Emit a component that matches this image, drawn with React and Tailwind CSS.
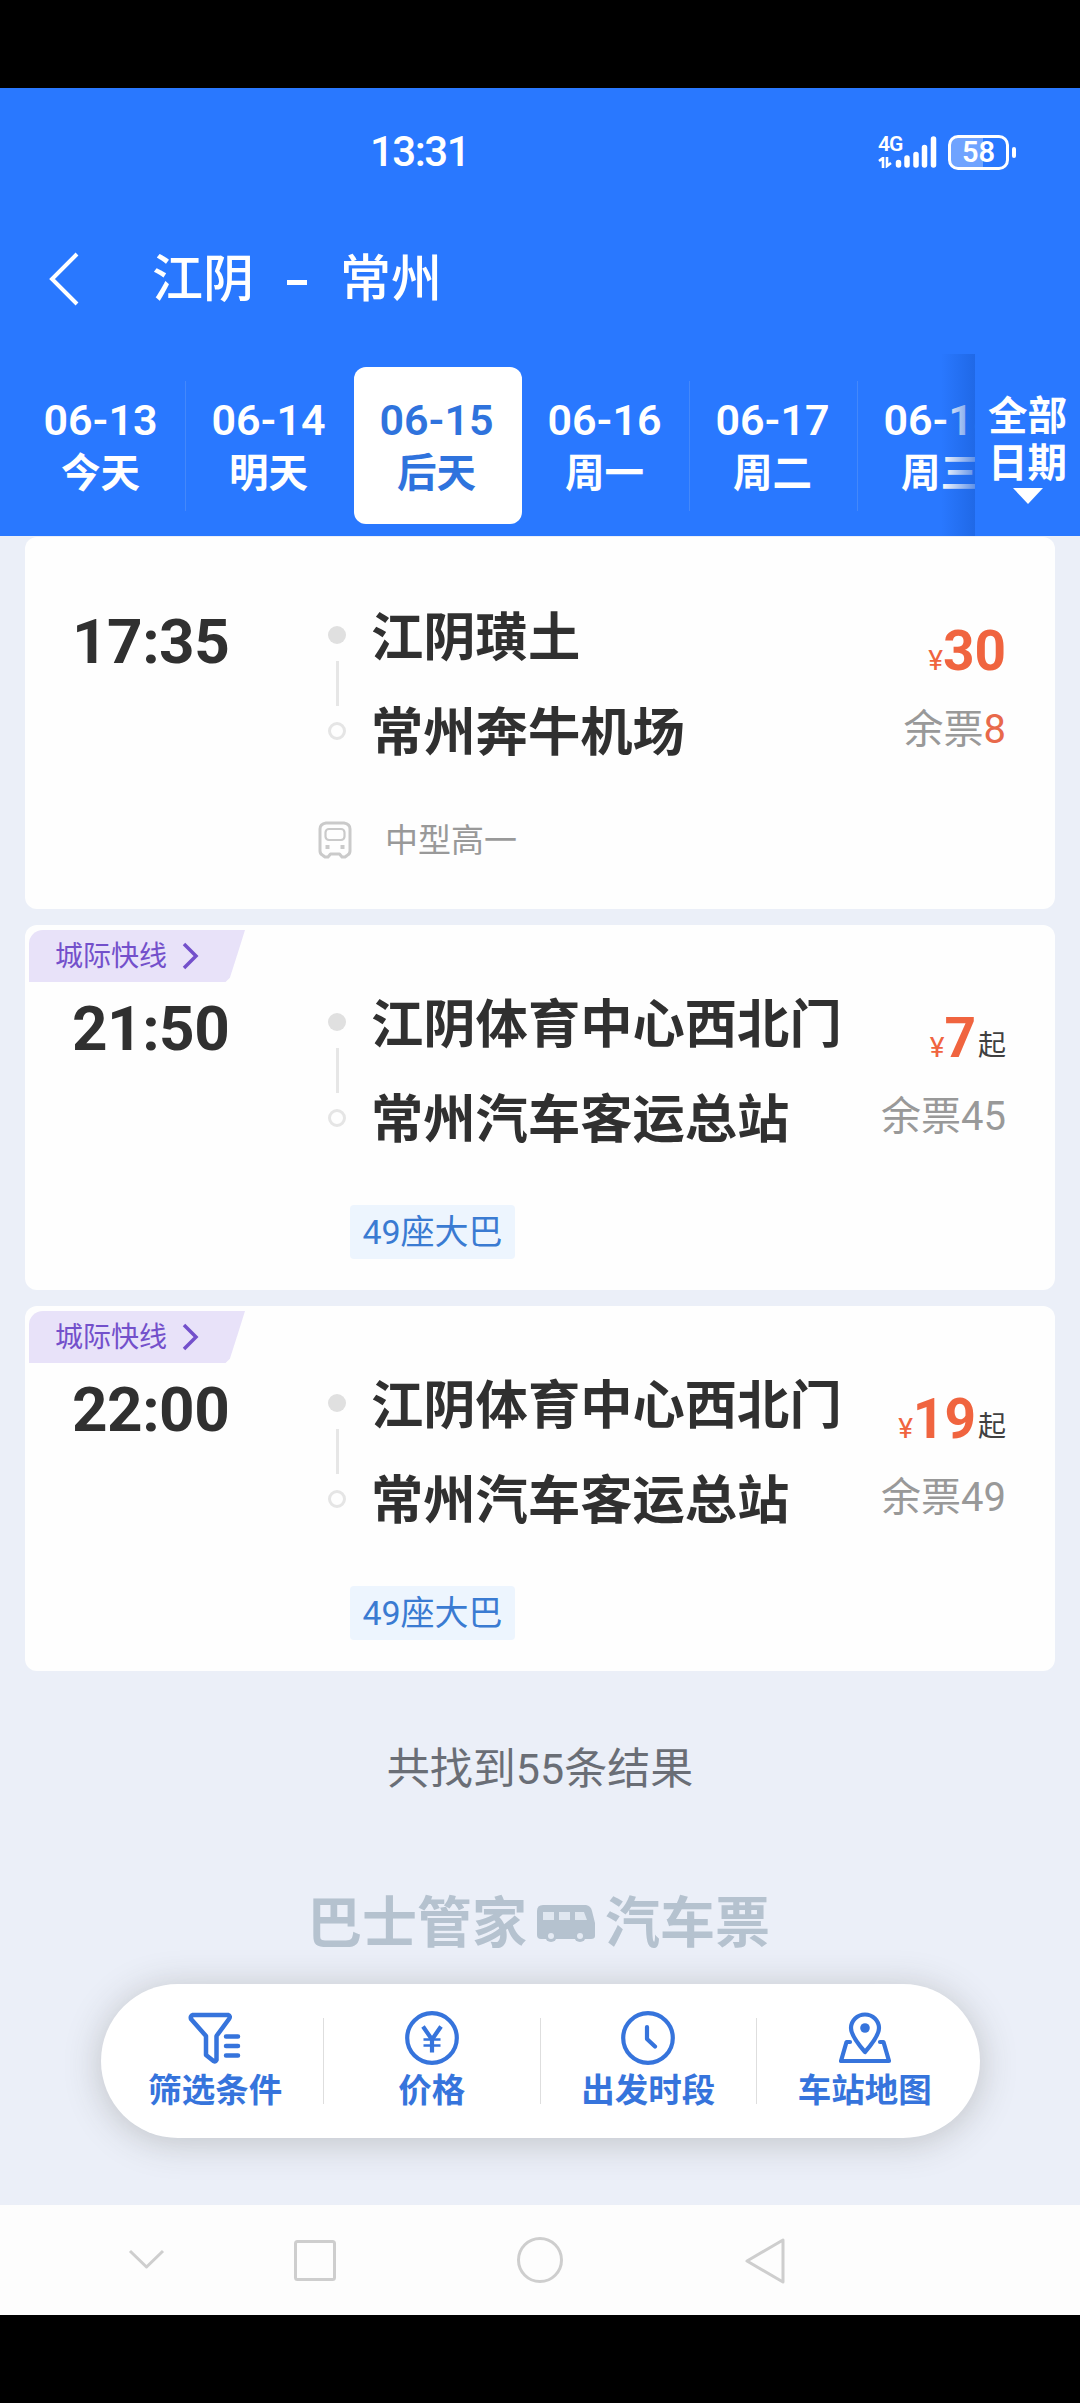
import React, { useState } from 'react';

const DATES = [
  { date: '06-13', label: '今天' },
  { date: '06-14', label: '明天' },
  { date: '06-15', label: '后天' },
  { date: '06-16', label: '周一' },
  { date: '06-17', label: '周二' },
  { date: '06-18', label: '周三' },
];

const TRIPS = [
  { time: '17:35', from: '江阴璜土', to: '常州奔牛机场', price: 30, left: 8, type: '中型高一' },
  { time: '21:50', from: '江阴体育中心西北门', to: '常州汽车客运总站', price: 7, left: 45, seats: '49座大巴', express: true },
  { time: '22:00', from: '江阴体育中心西北门', to: '常州汽车客运总站', price: 19, left: 49, seats: '49座大巴', express: true },
];

const StatusBar = () => (
  <div className="flex h-[128px] items-center pl-[370px] pr-[64px]">
    <span className="text-[42px] font-medium leading-none tracking-[-1.5px]">13:31</span>
    <div className="ml-auto flex items-center gap-[11px]">
      <div className="flex h-[32px] items-end">
        <div className="flex w-[24px] flex-col">
          <span className="text-[21px] font-semibold leading-[17px] tracking-[-1px]">4G</span>
          <svg width="15" height="11" viewBox="0 0 15 11" className="mt-[4px]" fill="none" stroke="currentColor" strokeWidth="2.6">
            <path d="M1 4l4-3v10M9 0v9l4-3" />
          </svg>
        </div>
        <svg width="42" height="32" viewBox="0 0 42 32" className="-ml-[7px]" fill="none" stroke="currentColor" strokeWidth="5.5" strokeLinecap="round">
          <path d="M3.5 26.500v2.500M12 22v7M21 18.500v10.500M29.500 11.500v17.500M38.500 3v26" />
        </svg>
      </div>
      <div className="flex items-center gap-[3px]">
        <div className="flex h-[35px] w-[61px] items-center justify-center rounded-[10px] border-[3px] border-white bg-[linear-gradient(90deg,#6fa3ff_58%,#2978ff_58%)] text-[29px] font-semibold leading-none">58</div>
        <span className="h-[11px] w-[4px] rounded-sm bg-white" />
      </div>
    </div>
  </div>
);

const DateTabs = ({ selected, onSelect }) => (
  <div className="flex h-[182px]">
    <div className="relative flex w-[975px] overflow-hidden pl-[18px] pt-[13px]">
      {DATES.map((d, i) => (
        <button
          key={d.date}
          onClick={() => onSelect(i)}
          className={`relative flex h-[157px] w-[168px] shrink-0 flex-col items-center rounded-[12px] pr-[3px] pt-[30px] ${
            i === selected ? 'bg-white text-[#2f73dd]' : ''
          }`}
        >
          <span className="text-[43px] font-semibold leading-[46px]">{d.date}</span>
          <span className="mt-[9px] text-[39.500px] font-bold leading-[44px]">{d.label}</span>
          {i !== selected && i + 1 !== selected && (
            <span className="absolute right-0 top-[14px] h-[130px] w-px bg-[#4488fb]" />
          )}
        </button>
      ))}
      <div className="absolute right-0 top-0 h-full w-[34px] bg-gradient-to-r from-[#2978ff]/0 to-[#1c62dc]/70" />
    </div>
    <button className="flex w-[105px] flex-col items-center pt-[39px] text-[39.500px] font-bold leading-[47px]">
      <span>全部</span>
      <span>日期</span>
      <svg width="30" height="16" viewBox="0 0 30 16" className="mt-[1px]" fill="currentColor">
        <path d="M0 0h30L15 16z" />
      </svg>
    </button>
  </div>
);

const BusIcon = () => (
  <svg width="34" height="38" viewBox="0 0 34 38" fill="none" stroke="#cacaca" strokeWidth="3">
    <path d="M8 2h18q6 1 6 6v22q0 3-3 4.500L27 36h-3l-2.500-3h-9L10 36H7l-2-1.500Q2 33 2 30V8q0-5 6-6z" strokeLinejoin="round" />
    <rect x="7.500" y="8" width="19" height="11" rx="3.500" strokeWidth="2.200" />
    <path d="M9.500 24v4M24.500 24v4" strokeWidth="4" />
  </svg>
);

const TripCard = ({ trip }) => (
  <div className={`relative rounded-[12px] bg-[#fefefe] ${trip.express ? 'h-[365px] pt-[52px]' : 'h-[372px] pt-[53px]'}`}>
    {trip.express && (
      <div className="absolute left-[4px] top-[5px] flex h-[52px] w-[216px] items-center gap-[15px] rounded-tl-[14px] bg-[#e8e2f9] pl-[26px] pt-[2px] text-[28px] leading-none text-[#7350cb] [clip-path:polygon(0_0,100%_0,97%_40%,93%_92%,91%_100%,0_100%)]">
        城际快线
        <svg width="18" height="28" viewBox="0 0 18 28" className="-mt-[2px]" fill="none" stroke="currentColor" strokeWidth="3.500">
          <path d="M2 2l12 12L2 26" />
        </svg>
      </div>
    )}
    <div className="flex pl-[47px] pr-[49px]">
      <div className="w-[256px] pt-[21px] text-[62px] font-bold leading-none tracking-[-0.5px] text-[#303030]">{trip.time}</div>
      <div className="flex w-[18px] flex-col items-center pt-[36px]">
        <span className="h-[18px] w-[18px] rounded-full bg-[#e0e0e0]" />
        <span className="mt-[17px] h-[45px] w-[3px] bg-[#e6e6e6]" />
        <span className="mt-[16px] h-[18px] w-[18px] rounded-full border-[3px] border-[#e5e5e5]" />
      </div>
      <div className="ml-[25px] flex flex-col whitespace-nowrap pt-[1px] text-[52.300px] font-bold leading-[95px] text-[#303030]">
        <span>{trip.from}</span>
        <span>{trip.to}</span>
      </div>
      <div className="ml-auto flex flex-col items-end whitespace-nowrap pt-[34px]">
        <div className="flex items-baseline text-[#f0643f]">
          <span className="text-[28px] leading-none">¥</span>
          <span className="text-[55px] font-bold leading-[54px]">{trip.price}</span>
          {trip.express && <span className="ml-[2px] -translate-y-[2px] text-[28px] leading-none text-[#404040]">起</span>}
        </div>
        <div className="mt-[32px] text-[40px] leading-[40px] text-[#999]">
          余票<span className={trip.left < 10 ? 'text-[#e8694b]' : ''}>{trip.left}</span>
        </div>
      </div>
    </div>
    {trip.type && (
      <div className="mt-[32px] flex h-[54px] items-center gap-[33px] pl-[293px] text-[33px] leading-none text-[#999]">
        <BusIcon />
        {trip.type}
      </div>
    )}
    {trip.seats && (
      <div className="ml-[325px] mt-[37px] flex h-[54px] w-[165px] items-center justify-center rounded-[4px] bg-[#edf5fe] text-[34px] leading-none text-[#3a7bd2]">
        {trip.seats}
      </div>
    )}
  </div>
);

const FilterIcon = () => (
  <svg width="54" height="54" viewBox="0 0 54 54" fill="none" stroke="currentColor" strokeWidth="4.500" strokeLinejoin="round" strokeLinecap="round">
    <path d="M5 4h35q3 1 1 4L28.500 25v24q-1 2-3 1L18 44V25L3 8q-1-3 2-4z" />
    <path d="M38 25.500h12M38 35h12M38 44.500h12" />
  </svg>
);

const PriceIcon = () => (
  <svg width="54" height="54" viewBox="0 0 54 54" fill="none" stroke="currentColor" strokeWidth="4.200">
    <circle cx="27" cy="27" r="24.800" />
    <path d="M18 15.500l9 13 9-13M27 28v13.500" />
    <path d="M18.500 28.500h17M18.500 34.500h17" strokeWidth="2.500" />
  </svg>
);

const ClockIcon = () => (
  <svg width="54" height="54" viewBox="0 0 54 54" fill="none" stroke="currentColor" strokeWidth="4.200" strokeLinecap="round" strokeLinejoin="round">
    <circle cx="27" cy="27" r="24.800" />
    <path d="M26 16v12l8 7.500" />
  </svg>
);

const MapIcon = () => (
  <svg width="54" height="54" viewBox="0 0 54 54" fill="none" stroke="currentColor" strokeWidth="4.200" strokeLinecap="round" strokeLinejoin="round">
    <path d="M27 41Q13 25 13 17a14 13.500 0 0 1 28 0q0 8-14 24z" />
    <circle cx="27" cy="17" r="4.800" fill="currentColor" stroke="none" />
    <path d="M12 31H8.500L3 50h48l-5.500-19H42" />
  </svg>
);

const FILTERS = [
  { label: '筛选条件', Icon: FilterIcon },
  { label: '价格', Icon: PriceIcon },
  { label: '出发时段', Icon: ClockIcon },
  { label: '车站地图', Icon: MapIcon },
];

const FilterBar = () => (
  <div className="mx-auto flex h-[154px] w-[879px] items-center rounded-full bg-white px-[7px] shadow-[0_4px_36px_rgba(60,60,50,0.25)]">
    {FILTERS.map(({ label, Icon }, i) => (
      <React.Fragment key={label}>
        {i > 0 && <span className="h-[86px] w-px bg-[#dedede]" />}
        <button className="flex flex-1 flex-col items-center pb-[3px] text-[#3674dc]">
          <Icon />
          <span className="mt-[8px] text-[33.500px] font-bold leading-[36px]">{label}</span>
        </button>
      </React.Fragment>
    ))}
  </div>
);

const Brand = () => (
  <div className="mt-[99px] flex h-[60px] items-center justify-center pr-[3px] text-[55px] font-bold leading-none text-[#b5c2cf]">
    巴士管家
    <svg width="58" height="38" viewBox="0 0 58 38" className="mx-[10px]">
      <path fill="currentColor" d="M6 1h43q5 1 6 6l3 12v13q0 3-4 3H4q-4 0-4-4V7q0-6 6-6z" />
      <circle cx="14" cy="32" r="6" fill="currentColor" />
      <circle cx="43" cy="32" r="6" fill="currentColor" />
      <circle cx="14" cy="32" r="3" fill="#e4eaf3" />
      <circle cx="43" cy="32" r="3" fill="#e4eaf3" />
      <path fill="#e0e7f0" d="M6 8h11v8H6zM22 8h11v8H22zM38 8h9l3 8H38z" />
    </svg>
    汽车票
  </div>
);

const NavBar = () => (
  <div className="h-[110px] bg-[#fdfdfd]">
    <svg width="1080" height="110" viewBox="0 0 1080 110" fill="none" stroke="#cecece" strokeWidth="3" strokeLinejoin="round">
      <path d="M130 46l16.500 16L163 46" />
      <rect x="295.500" y="36.500" width="39" height="38" rx="2" />
      <circle cx="540" cy="55" r="21.500" />
      <path d="M783 35v42L747 56z" />
    </svg>
  </div>
);

export default function App() {
  const [selected, setSelected] = useState(2);

  return (
    <div className="flex h-[2403px] w-[1080px] flex-col overflow-hidden bg-black py-[88px] font-['Roboto','Noto_Sans_CJK_SC',sans-serif]">
      <header className="h-[448px] shrink-0 bg-[#2978ff] text-white">
        <StatusBar />
        <div className="flex h-[138px] items-center pb-[12px] pl-[49px]">
          <svg width="30" height="54" viewBox="0 0 30 54" fill="none" stroke="currentColor" strokeWidth="4">
            <path d="M28 2L3 27l25 25" />
          </svg>
          <h1 className="flex items-center pl-[73px] text-[51px] font-medium leading-none">
            <span>江阴</span>
            <span className="mx-[33px] mt-[6px] h-[5px] w-[20px] bg-white" />
            <span>常州</span>
          </h1>
        </div>
        <DateTabs selected={selected} onSelect={setSelected} />
      </header>

      <main className="h-[1669px] shrink-0 bg-[#ebeff8] pt-px">
        <div className="flex flex-col gap-[16px] px-[25px]">
          {TRIPS.map((trip) => (
            <TripCard key={trip.time} trip={trip} />
          ))}
        </div>
        <p className="mt-[73px] text-center text-[43px] leading-[50px] text-[#6a6e76]">共找到55条结果</p>
        <Brand />
        <div className="mt-[31px]">
          <FilterBar />
        </div>
      </main>

      <NavBar />
    </div>
  );
}
